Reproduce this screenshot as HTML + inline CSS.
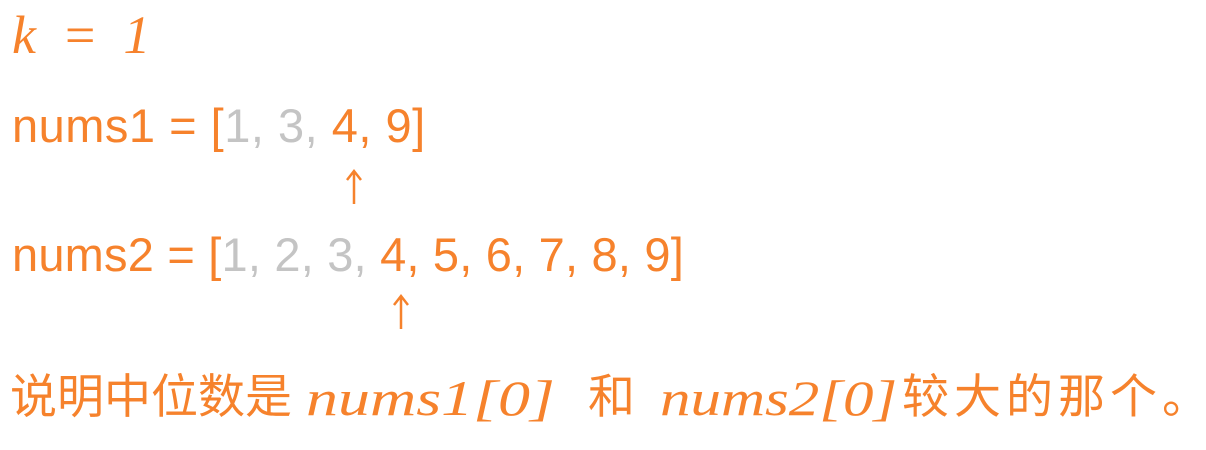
<!DOCTYPE html>
<html><head><meta charset="utf-8"><style>
body{margin:0;width:1206px;height:450px;background:#fff;position:relative;overflow:hidden;font-family:"Liberation Sans","Noto Sans CJK SC",sans-serif;color:#f6822c}
.a{position:absolute;white-space:pre;line-height:1}
.g{color:#c4c4c4}
.h{font-family:"Liberation Serif",serif;font-style:italic}
</style></head><body>
<div class="a h" style="left:12px;top:8px;font-size:54px;letter-spacing:6px">k = 1</div>
<div class="a" style="left:12px;top:102px;font-size:47px;letter-spacing:0.5px">nums1 = [<span class="g">1, 3, </span>4, 9]</div>
<svg class="a" style="left:344px;top:168px" width="20" height="40"><path d="M10 36V4M3 12L10 3L17 12" stroke="#f6822c" stroke-width="2.5" fill="none"/></svg>
<div class="a" style="left:12px;top:231px;font-size:47px;letter-spacing:0.2px">nums2 = [<span class="g">1, 2, 3, </span>4, 5, 6, 7, 8, 9]</div>
<svg class="a" style="left:391px;top:293px" width="20" height="40"><path d="M10 36V4M3 12L10 3L17 12" stroke="#f6822c" stroke-width="2.5" fill="none"/></svg>
<div class="a" style="left:10px;top:373px;font-size:47px">说明中位数是</div>
<div class="a h" style="left:306px;top:373px;font-size:50px;transform:scaleX(1.28);transform-origin:left">nums1[0]</div>
<div class="a" style="left:588px;top:373px;font-size:47px">和</div>
<div class="a h" style="left:660px;top:373px;font-size:50px;transform:scaleX(1.22);transform-origin:left">nums2[0]</div>
<div class="a" style="left:902px;top:373px;font-size:47px;letter-spacing:5px">较大的那个。</div>
</body></html>
